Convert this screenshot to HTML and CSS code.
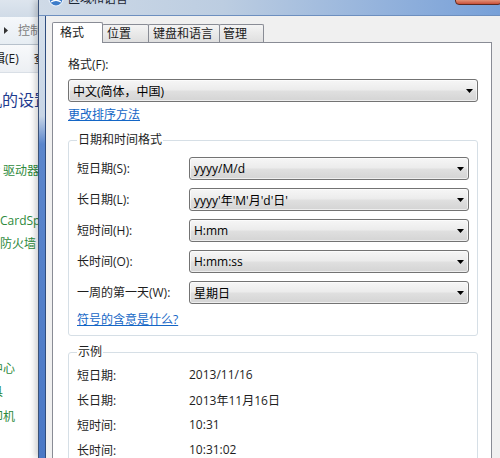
FILE: index.html
```html
<!DOCTYPE html>
<html lang="zh-CN">
<head>
<meta charset="utf-8">
<title>区域和语言</title>
<link rel="stylesheet" href="styles.css">
</head>
<body>
<div class="screen">
  <div class="bgwin">
    <div class="bw-top"></div>
    <div class="bw-addr">
      <svg class="bw-arrow" width="4" height="7" viewBox="0 0 4 7"><path d="M0 0L4 3.5L0 7Z" fill="#333"/></svg>
      <span class="bw-crumb">控制面板</span>
    </div>
    <div class="bw-menu"><span class="bw-menu-item bw-edit">编辑(E)</span><span class="bw-menu-item">查看(V)</span></div>
    <div class="bw-content">
      <div class="bw-heading">机的设置</div>
      <div class="bw-link bw-l1">r 驱动器加密</div>
      <div class="bw-link bw-l2">CardSpace</div>
      <div class="bw-link bw-l3">防火墙</div>
      <div class="bw-link bw-l4">中心</div>
      <div class="bw-link bw-l5">工具</div>
      <div class="bw-link bw-l6">印机</div>
    </div>
  </div>

  <div class="dialog">
    <div class="titlebar">
      <svg class="title-icon" width="16" height="16" viewBox="0 0 16 16">
        <circle cx="8" cy="8" r="7" fill="#3d7cc9" stroke="#e8f0fa" stroke-width="1.2"/>
        <path d="M3 11C6 9 10 9 13 11" stroke="#ffffff" stroke-width="1.2" fill="none"/>
      </svg>
      <span class="title">区域和语言</span>
      <span class="close"></span>
    </div>
    <div class="dlg-main">
      <div class="frame"></div>
      <div class="client">
        <div class="tabs">
          <div class="tab tab-active">格式</div>
          <div class="tab tab-pos">位置</div>
          <div class="tab tab-kbd">键盘和语言</div>
          <div class="tab tab-admin">管理</div>
        </div>
        <div class="panel">
          <div class="field-label">格式(F):</div>
          <div class="combo combo-main"><span>中文(简体，中国)</span><svg class="arrow" width="7" height="4" viewBox="0 0 7 4"><path d="M0 0H7L3.5 4Z" fill="#000"/></svg></div>
          <a class="link link-sort">更改排序方法</a>

          <fieldset class="group">
            <legend class="group-title">日期和时间格式</legend>
            <div class="fmt-grid">
              <span class="row-label">短日期(S):</span>
              <div class="combo"><span>yyyy/M/d</span><svg class="arrow" width="7" height="4" viewBox="0 0 7 4"><path d="M0 0H7L3.5 4Z" fill="#000"/></svg></div>
              <span class="row-label">长日期(L):</span>
              <div class="combo"><span>yyyy'年'M'月'd'日'</span><svg class="arrow" width="7" height="4" viewBox="0 0 7 4"><path d="M0 0H7L3.5 4Z" fill="#000"/></svg></div>
              <span class="row-label">短时间(H):</span>
              <div class="combo"><span>H:mm</span><svg class="arrow" width="7" height="4" viewBox="0 0 7 4"><path d="M0 0H7L3.5 4Z" fill="#000"/></svg></div>
              <span class="row-label">长时间(O):</span>
              <div class="combo"><span>H:mm:ss</span><svg class="arrow" width="7" height="4" viewBox="0 0 7 4"><path d="M0 0H7L3.5 4Z" fill="#000"/></svg></div>
              <span class="row-label">一周的第一天(W):</span>
              <div class="combo"><span>星期日</span><svg class="arrow" width="7" height="4" viewBox="0 0 7 4"><path d="M0 0H7L3.5 4Z" fill="#000"/></svg></div>
            </div>
            <a class="link link-symbols">符号的含意是什么?</a>
          </fieldset>

          <fieldset class="group group-sample">
            <legend class="group-title">示例</legend>
            <div class="sample-grid">
              <span>短日期:</span><span>2013/11/16</span>
              <span>长日期:</span><span>2013年11月16日</span>
              <span>短时间:</span><span>10:31</span>
              <span>长时间:</span><span>10:31:02</span>
            </div>
          </fieldset>
        </div>
      </div>
    </div>
  </div>
</div>
</body>
</html>
```

FILE: styles.css
```css
html, body {
  margin: 0;
  padding: 0;
}
body {
  width: 500px;
  height: 458px;
  overflow: hidden;
  font-family: "Open Sans", "Noto Sans CJK SC", sans-serif;
  font-size: 12px;
  color: #1e1e1e;
  background: #fff;
}
.screen {
  display: flex;
  width: 500px;
  height: 458px;
  overflow: hidden;
}

/* background explorer window */
.bgwin {
  width: 38px;
  flex: none;
  display: flex;
  flex-direction: column;
  overflow: hidden;
  background: #fff;
}
.bw-top {
  height: 17px;
  flex: none;
  background: linear-gradient(#dde5ee, #d0dbe7);
}
.bw-addr {
  height: 28px;
  flex: none;
  box-sizing: border-box;
  border-bottom: 1px solid #b7c1cc;
  background: linear-gradient(#f5f8fb, #e7edf3);
  display: flex;
  align-items: center;
  padding-left: 4px;
  white-space: nowrap;
}
.bw-arrow {
  flex: none;
  margin-right: 10px;
}
.bw-crumb {
  color: #7d7d7d;
  line-height: 16px;
}
.bw-menu {
  height: 28px;
  flex: none;
  box-sizing: border-box;
  border-bottom: 1px solid #d9dfe6;
  background: linear-gradient(#f8f9fb, #eceff3);
  display: flex;
  align-items: center;
  white-space: nowrap;
}
.bw-menu-item {
  line-height: 16px;
  color: #1a1a1a;
  flex: none;
}
.bw-edit {
  margin-left: -19px;
  margin-right: 15px;
}
.bw-content {
  flex: 1;
  display: flex;
  flex-direction: column;
  white-space: nowrap;
}
.bw-heading {
  font-family: "Noto Sans CJK SC", sans-serif;
  font-size: 16px;
  line-height: 24px;
  color: #1e3b8e;
  margin-top: 14px;
  margin-left: -14px;
}
.bw-link {
  line-height: 16px;
  color: #2e8a3c;
}
.bw-l1 { margin-top: 52px; margin-left: -5px; }
.bw-l2 { margin-top: 34px; }
.bw-l3 { margin-top: 7px; }
.bw-l4 { margin-top: 109px; margin-left: -9px; }
.bw-l5 { margin-top: 7px; margin-left: -21px; }
.bw-l6 { margin-top: 9px; margin-left: -9px; }

/* dialog */
.dialog {
  flex: 1;
  min-width: 0;
  display: flex;
  flex-direction: column;
  border-left: 1px solid #3b5278;
  position: relative;
  box-shadow: -3px 0 6px rgba(0, 0, 0, 0.18);
}
.titlebar {
  height: 16px;
  flex: none;
  box-sizing: border-box;
  border-bottom: 1px solid #6d8fbf;
  background: linear-gradient(to right, #cfdae7 0%, #bccde1 40%, #93b2dc 75%, #77a0d8 100%);
  display: flex;
  align-items: flex-start;
  padding-left: 9px;
  overflow: hidden;
}
.title-icon {
  flex: none;
  margin-top: -9px;
  margin-right: 4px;
}
.title {
  line-height: 16px;
  margin-top: -9px;
  color: #1b2634;
  white-space: nowrap;
}
.close {
  flex: none;
  margin-left: auto;
  margin-right: -2px;
  margin-top: -1px;
  width: 47px;
  height: 6px;
  box-sizing: border-box;
  border: 1px solid #5e2a20;
  border-radius: 0 0 4px 4px;
  background: linear-gradient(#e39277, #c8503a);
}
.dlg-main {
  flex: 1;
  min-height: 0;
  display: flex;
}
.frame {
  width: 7px;
  flex: none;
  box-sizing: border-box;
  border-right: 1px solid #2f4d7e;
  background: linear-gradient(#d6e0eb 0px, #c7d5e6 100px, #5b86cc 128px, #4a78c6 100%);
}
.client {
  flex: 1;
  min-width: 0;
  background: #f0f0f0;
  padding: 6px 8px 0 6px;
  display: flex;
  flex-direction: column;
}

/* tabs */
.tabs {
  display: flex;
  align-items: flex-end;
  height: 20px;
  flex: none;
}
.tab {
  box-sizing: border-box;
  height: 18px;
  border: 1px solid #898c95;
  border-bottom: none;
  border-radius: 2px 2px 0 0;
  background: linear-gradient(#f4f4f4, #dfdfdf);
  line-height: 17px;
  padding-left: 4px;
  margin-left: -1px;
  white-space: nowrap;
  color: #1a1a1a;
}
.tab-active {
  width: 51px;
  height: 21px;
  margin-left: 0;
  margin-bottom: -1px;
  padding-left: 7px;
  line-height: 20px;
  background: #fff;
  position: relative;
  z-index: 1;
}
.tab-pos { width: 47px; }
.tab-kbd { width: 72px; }
.tab-admin { width: 45px; padding-left: 3px; }

/* panel */
.panel {
  flex: 1;
  min-height: 0;
  background: #fff;
  border: 1px solid #898c95;
  border-bottom: none;
  padding: 14px 13px 0 15px;
}
.field-label {
  line-height: 16px;
}
.combo {
  height: 23px;
  box-sizing: border-box;
  display: flex;
  align-items: center;
  justify-content: space-between;
  padding: 0 4px 0 4px;
  border: 1px solid #737373;
  border-radius: 3px;
  background: linear-gradient(#f6f6f6 0%, #ececec 45%, #dfdfdf 55%, #d4d4d4 100%);
  box-shadow: inset 0 0 0 1px rgba(255, 255, 255, 0.6);
  color: #000;
  white-space: nowrap;
}
.arrow {
  flex: none;
}
.combo-main {
  margin-top: 6px;
}
.link {
  display: block;
  line-height: 16px;
  color: #1466c6;
  text-decoration: underline;
}
.link-sort {
  margin-top: 5px;
}
.group {
  margin: 9px 0 0;
  padding: 0 8px 7px;
  border: 1px solid #d6dfe6;
  border-radius: 3px;
  min-width: 0;
}
.group-title {
  padding: 0 1px;
  line-height: 16px;
  color: #1e1e1e;
}
.fmt-grid {
  display: grid;
  grid-template-columns: 112px 1fr;
  row-gap: 8px;
  align-items: center;
  margin-top: 9px;
}
.row-label {
  line-height: 16px;
  white-space: nowrap;
}
.link-symbols {
  margin-top: 8px;
}
.group-sample {
  margin-top: 8px;
}
.sample-grid {
  display: grid;
  grid-template-columns: 112px 1fr;
  grid-auto-rows: 25px;
  align-items: center;
  padding-top: 2px;
  white-space: nowrap;
}
```
